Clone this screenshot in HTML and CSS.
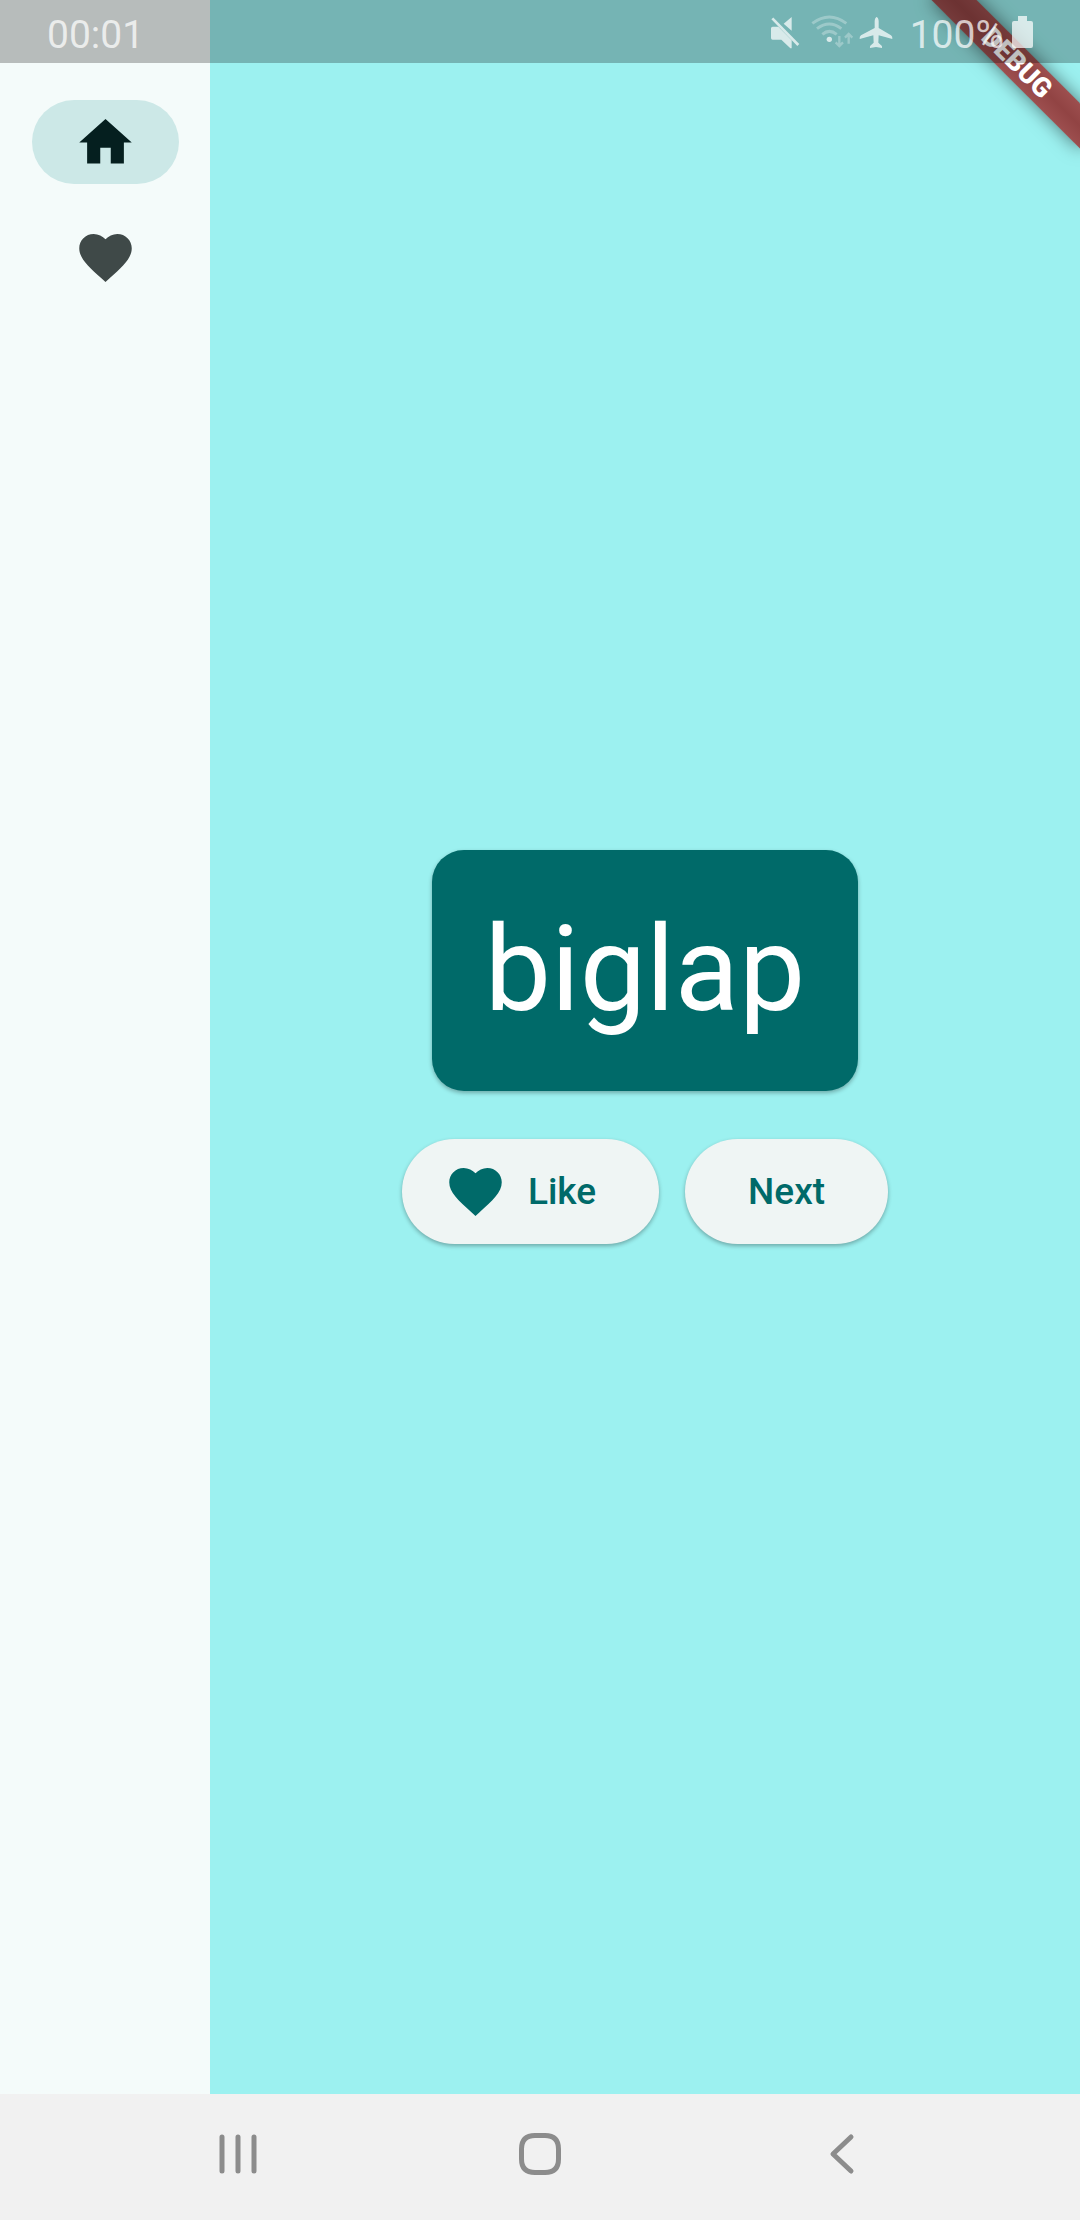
FILE: index.html
```html
<!DOCTYPE html>
<html lang="en">
<head>
<meta charset="utf-8">
<meta name="viewport" content="width=device-width, initial-scale=1">
<title>Name generator</title>
<link rel="stylesheet" href="styles.css">
</head>
<body>
<div class="app">
  <nav class="rail" aria-label="Main">
    <button class="rail-item rail-item-selected" type="button" aria-label="Home">
      <svg class="icon" viewBox="0 0 24 24"><path d="M10 20v-6h4v6h5v-8h3L12 3 2 12h3v8z"/></svg>
    </button>
    <button class="rail-item" type="button" aria-label="Favorites">
      <svg class="icon" viewBox="0 0 24 24"><path d="M12 21.35l-1.45-1.32C5.4 15.36 2 12.28 2 8.5 2 5.42 4.42 3 7.5 3c1.74 0 3.41.81 4.5 2.09C13.09 3.81 14.76 3 16.5 3 19.58 3 22 5.42 22 8.5c0 3.78-3.4 6.86-8.55 11.54L12 21.35z"/></svg>
    </button>
  </nav>
  <main class="page">
    <h1 class="word-card">biglap</h1>
    <div class="actions">
      <button class="pill pill-with-icon" type="button">
        <svg class="icon" viewBox="0 0 24 24" aria-hidden="true"><path d="M12 21.35l-1.45-1.32C5.4 15.36 2 12.28 2 8.5 2 5.42 4.42 3 7.5 3c1.74 0 3.41.81 4.5 2.09C13.09 3.81 14.76 3 16.5 3 19.58 3 22 5.42 22 8.5c0 3.78-3.4 6.86-8.55 11.54L12 21.35z"/></svg>
        <span>Like</span>
      </button>
      <button class="pill" type="button">Next</button>
    </div>
  </main>
  <div class="banner-corner"><div class="banner">DEBUG</div></div>
  <header class="status-bar">
    <time class="clock">00:01</time>
    <div class="status-icons">
      <svg width="32" height="34" viewBox="24 30 96 102" aria-label="Muted"><path d="M92 36v41L68 56zM35 65h17l40 41v24h-4L61 104H35q-5 0-5-5V70q0-5 5-5z"/><path class="line" d="M34 40l78 80" stroke-width="8"/></svg>
      <svg class="wifi" width="44" height="34" viewBox="150 30 132 102" aria-label="Wi-Fi"><g class="faint"><path class="line" d="M154 55q51-38 102 0M168 71q37-28 73 0M184 88q21-18 43 0" stroke-width="9"/><path class="line" d="M235 93v29M224 112l11 11 11-11M263 116V87M252 98l11-11 11 11" stroke-width="7"/></g><circle cx="205" cy="103" r="8"/></svg>
      <svg width="36" height="34" viewBox="291 30 108 102" aria-label="Airplane mode"><path d="M345 36q7 0 8 12v21l37 22q5 4 4 11l-41-11-1 22 10 9q2 3 1 7l-18-3-18 3q-1-4 1-7l10-9-1-22-41 11q-1-7 4-11l41-22V48q1-12 8-12z"/></svg>
    </div>
    <span class="battery-level">100%</span>
    <svg class="battery" width="21" height="32" viewBox="0 0 21 32" aria-label="Battery full"><path d="M6 0h9v5h4q2 0 2 2v23q0 2-2 2H2q-2 0-2-2V7q0-2 2-2h4z"/></svg>
  </header>
</div>
<footer class="system-nav">
  <button class="system-button" type="button" aria-label="Recent apps">
    <svg width="42" height="42" viewBox="0 0 42 42"><path d="M5 4v34M21 4v34M37 4v34"/></svg>
  </button>
  <button class="system-button" type="button" aria-label="Home screen">
    <svg width="42" height="42" viewBox="0 0 42 42"><path d="M21 2.500h5q13.500 0 13.500 13.500v10q0 13.500-13.500 13.500H16Q2.500 39.500 2.500 26V16Q2.500 2.500 16 2.500z"/></svg>
  </button>
  <button class="system-button" type="button" aria-label="Back">
    <svg width="42" height="42" viewBox="0 0 42 42"><path d="M30 4L12 21l18 17"/></svg>
  </button>
</footer>
</body>
</html>
```
FILE: styles.css
```css
* {
  box-sizing: border-box;
}

body {
  margin: 0;
  min-height: 100vh;
  display: flex;
  flex-direction: column;
  font-family: Roboto, "Liberation Sans", sans-serif;
  background: #f1f1f1;
}

button {
  margin: 0;
  padding: 0;
  border: 0;
  background: none;
  color: inherit;
  font: inherit;
  cursor: pointer;
}

svg {
  display: block;
  flex: none;
}

.icon {
  width: 63px;
  height: 63px;
  fill: currentColor;
}

.app {
  position: relative;
  flex: 1;
  display: flex;
  overflow: hidden;
}

/* Navigation rail */
.rail {
  flex: none;
  width: 210px;
  padding-top: 100px;
  display: flex;
  flex-direction: column;
  align-items: center;
  gap: 31px;
  background: #f4fbfa;
  color: #3f4948;
}

.rail-item {
  width: 147px;
  height: 84px;
  border-radius: 42px;
  display: flex;
  align-items: center;
  justify-content: center;
}

.rail-item-selected {
  background: #cce8e7;
  color: #051f1f;
}

/* Generator page */
.page {
  flex: 1;
  display: flex;
  flex-direction: column;
  align-items: center;
  justify-content: center;
  gap: 48px;
  background: #9cf1f0;
}

.word-card {
  margin: 0;
  padding: 52px 53px;
  border-radius: 32px;
  background: #006a69;
  color: #fff;
  font-size: 118px;
  font-weight: 400;
  line-height: 137px;
  box-shadow: 0 2px 4px rgba(0, 0, 0, 0.3);
}

.actions {
  display: flex;
  gap: 26px;
}

.pill {
  height: 105px;
  padding: 0 63px;
  border-radius: 53px;
  display: flex;
  align-items: center;
  gap: 21px;
  background: #eff5f4;
  color: #006a69;
  font-size: 37px;
  font-weight: 500;
  box-shadow: 0 2px 4px rgba(0, 0, 0, 0.3);
}

.pill-with-icon {
  padding-left: 42px;
}

/* Corner ribbon */
.banner-corner {
  position: absolute;
  top: 0;
  right: 0;
  width: 240px;
  height: 240px;
  overflow: hidden;
}

.banner {
  position: absolute;
  top: 47px;
  right: -42px;
  width: 210px;
  height: 32px;
  transform: rotate(45deg);
  background: linear-gradient(#9d4f4f, #914343 50%, #9d4f4f);
  color: #fff;
  font-size: 27px;
  font-weight: 900;
  line-height: 32px;
  text-align: center;
  box-shadow: 0 0 18px rgba(0, 0, 0, 0.5);
}

/* Status bar, drawn over the app */
.status-bar {
  position: absolute;
  top: 0;
  left: 0;
  right: 0;
  height: 63px;
  padding: 0 47px;
  display: flex;
  align-items: center;
  background: rgba(0, 0, 0, 0.25);
  color: rgba(255, 255, 255, 0.72);
  fill: currentColor;
  font-size: 39px;
  line-height: 63px;
}

.clock {
  flex: 1;
  padding-top: 8px;
}

.status-icons {
  display: flex;
}

.wifi {
  margin: 0 3px 0 10px;
}

.line {
  fill: none;
  stroke: currentColor;
}

.faint {
  opacity: 0.4;
}

.battery-level {
  padding: 8px 8px 0 16px;
}

/* System navigation */
.system-nav {
  height: 126px;
  padding: 0 8% 6px;
  display: flex;
  color: #8c8c8c;
}

.system-button {
  flex: 1;
  display: flex;
  align-items: center;
  justify-content: center;
}

.system-button svg {
  fill: none;
  stroke: currentColor;
  stroke-width: 5;
  stroke-linecap: round;
  stroke-linejoin: round;
}
```
